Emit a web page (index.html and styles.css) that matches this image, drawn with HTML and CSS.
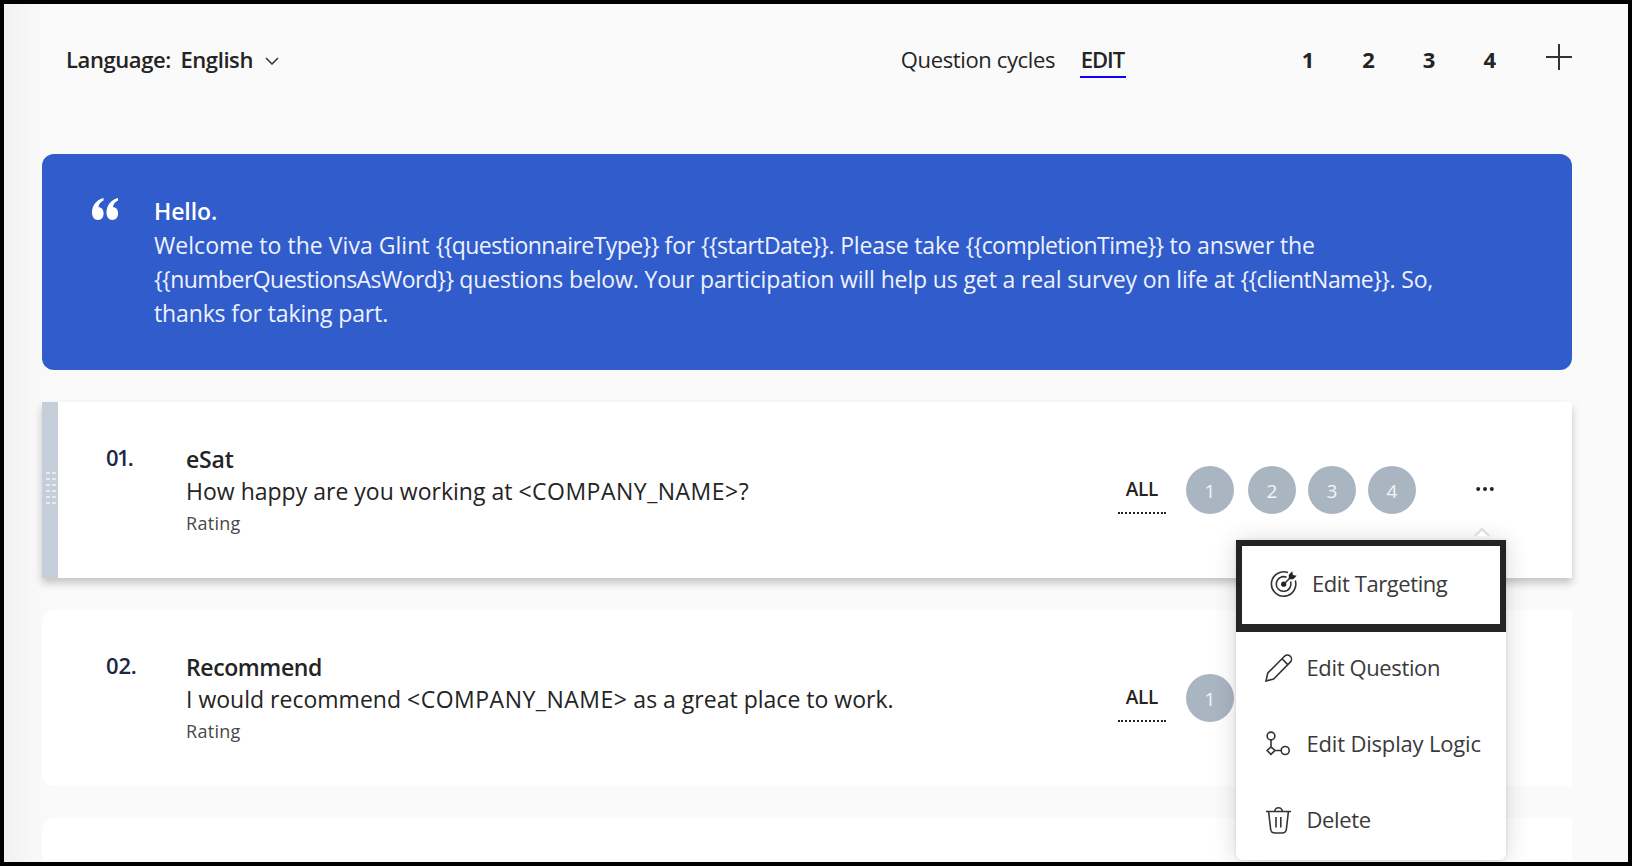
FILE: index.html
```html
<!DOCTYPE html>
<html lang="en">
<head>
<meta charset="utf-8">
<title>Questionnaire</title>
<link rel="stylesheet" href="styles.css">
</head>
<body>
<div class="page">
  <header class="toolbar">
    <span class="lang-label">Language:</span>
    <span class="lang-value">English</span>
    <svg class="chevron" width="14" height="8" viewBox="0 0 14 8"><path d="M1 1l6 6 6-6"/></svg>
    <span class="cycles-label">Question cycles</span>
    <a class="edit">EDIT</a>
    <nav class="cycles"><b>1</b><b>2</b><b>3</b><b>4</b></nav>
    <svg class="plus" width="26" height="26" viewBox="0 0 26 26"><path d="M13 0v26M0 13h26"/></svg>
  </header>

  <section class="banner">
    <svg class="quote" width="28" height="23" viewBox="0 0 28 23"><path d="M11.5 0v2.6C8.500 4 6.800 6.300 6.500 9.300C9.800 9.300 11.600 12 11.600 15.300C11.600 19.500 9.300 22 6 22C2.300 22 0 19 0 14.500C0 7.500 4.500 1.500 11.500 0zM26 0v2.600C23 4 21.300 6.300 21 9.300C24.300 9.300 26.100 12 26.100 15.300C26.100 19.500 23.800 22 20.500 22C16.800 22 14.500 19 14.500 14.500C14.500 7.500 19 1.500 26 0z"/></svg>
    <div class="banner-text">
      <strong class="hello">Hello.</strong>
      <p class="line line-1"><span class="lead">Welcome to the Viva Glint </span><span class="var">{{questionnaireType}}</span> for <span class="var">{{startDate}}</span>. Please take <span class="var">{{completionTime}}</span> to answer the</p>
      <p class="line line-2"><span class="var">{{numberQuestionsAsWord}}</span> questions below. Your participation will help us get a real survey on life at <span class="var">{{clientName}}</span>. So,</p>
      <p class="line line-3">thanks for taking part.</p>
    </div>
  </section>

  <article class="card card-active">
    <div class="handle">
      <svg width="10" height="35" viewBox="0 0 10 35"><path d="M2 0v35M8 0v35"/></svg>
    </div>
    <div class="number number-1">01.</div>
    <div class="question">
      <h2 class="title">eSat</h2>
      <p class="prompt">How happy are you working at <span class="company">&lt;COMPANY_NAME&gt;</span>?</p>
      <p class="kind">Rating</p>
    </div>
    <div class="audience">
      <span class="all">ALL</span>
      <span class="dot dot-first">1</span><span class="dot">2</span><span class="dot">3</span><span class="dot">4</span>
      <svg class="more" width="18" height="6" viewBox="0 0 18 6"><circle cx="2.200" cy="3" r="2"/><circle cx="9" cy="3" r="2"/><circle cx="15.800" cy="3" r="2"/></svg>
    </div>
  </article>

  <article class="card">
    <div class="number">02.</div>
    <div class="question">
      <h2 class="title title-2">Recommend</h2>
      <p class="prompt">I would recommend <span class="company">&lt;COMPANY_NAME&gt;</span> as a great place to work.</p>
      <p class="kind">Rating</p>
    </div>
    <div class="audience">
      <span class="all">ALL</span>
      <span class="dot dot-first">1</span><span class="dot"></span><span class="dot"></span><span class="dot"></span>
      <svg class="more" width="18" height="6"></svg>
    </div>
  </article>

  <article class="card"></article>

  <div class="menu">
    <svg class="menu-tip" width="16" height="12" viewBox="0 0 16 12"><path d="M1 9l7-7 7 7"/></svg>
    <div class="item item-focus">
      <svg width="28" height="28" viewBox="0 0 28 28">
        <path d="M18 2.600A12.200 12.200 0 1 0 25.300 10.500M16.500 7.300A7.300 7.300 0 1 0 20.500 11.600M14 14l6.500-6.500"/>
        <path class="solid" d="M18.800 8.600V4.800L22.300 1.300l.6 3.800 3.800.6-3.500 3.500h-3.800z"/>
        <circle class="solid" cx="13.700" cy="14.200" r="2.600"/>
      </svg>
      <span class="label-1">Edit Targeting</span>
    </div>
    <div class="item">
      <svg width="28" height="28" viewBox="0 0 28 28"><path d="M1 27l1.800-8L19.500 2.300a3.950 3.950 0 0 1 5.800 5.800L8.600 25zM17 4.800l5.800 5.800"/></svg>
      <span class="label-2">Edit Question</span>
    </div>
    <div class="item">
      <svg width="28" height="28" viewBox="0 0 28 28"><circle cx="6" cy="6" r="3.900"/><path d="M6 9.900v7M6 16.900l3.900 3.600L6 24.400l-3.900-3.900zM9.900 20.500h6.300"/><circle cx="20.200" cy="20.500" r="4"/></svg>
      <span class="label-3">Edit Display Logic</span>
    </div>
    <div class="item">
      <svg width="28" height="28" viewBox="0 0 28 28"><path d="M1 5.500h25M9.700 5.500a3.800 3.800 0 0 1 7.600 0M3.600 5.500l2 17.500q.4 4 4.400 4h7q4 0 4.400-4l2-17.500M11 11v10.500M15.800 11v10.500"/></svg>
      <span class="label-4">Delete</span>
    </div>
  </div>
</div>
</body>
</html>
```

FILE: styles.css
```css
* { box-sizing: border-box; }

body {
  margin: 0;
  font-family: "Open Sans", "Noto Sans", sans-serif;
  font-size: 23px;
  color: #242424;
}

h2, p { margin: 0; }

svg { flex: none; display: block; fill: none; stroke: #333; stroke-width: 1.6; }

.page {
  position: relative;
  width: 1632px;
  height: 866px;
  overflow: hidden;
  border: 4px solid #000;
  padding: 0 56px 0 38px;
  background: linear-gradient(90deg, #f1f1f1 0, #f8f8f8 30px, #fafafa 50px);
}

.toolbar {
  display: flex;
  align-items: flex-start;
  height: 150px;
  padding: 38px 0 0 24px;
  font-size: 22px;
  line-height: 34px;
  white-space: nowrap;
}

.lang-label { width: 114.5px; font-weight: 600; letter-spacing: -0.4px; }
.lang-value { width: 84.5px; font-weight: 600; letter-spacing: -0.4px; }
.chevron { margin-top: 15px; stroke-width: 1.5; }
.cycles-label { margin-left: 622px; width: 179px; letter-spacing: -0.37px; }
.edit { width: 46px; height: 36px; border-bottom: 2px solid #1400ff; padding-left: 1px; font-weight: 600; font-size: 22px; letter-spacing: -1px; }
.cycles { display: flex; margin-left: 152px; }
.cycles b { width: 60.6px; text-align: center; }
.plus { margin: 2px 0 0 26px; stroke-width: 2; }

.banner {
  display: flex;
  height: 216px;
  padding: 40px 0 0 50px;
  border-radius: 12px;
  background: #315ccc;
  color: #fff;
}
.quote { margin-top: 4px; fill: #fff; stroke: none; }
.banner-text { margin-left: 34px; line-height: 34px; }
.hello { display: block; font-weight: 600; letter-spacing: -0.1px; }
.line { white-space: nowrap; color: #eef2fc; }
.line-1 { letter-spacing: -0.15px; }
.line-2 { letter-spacing: -0.13px; }
.line-3 { letter-spacing: -0.13px; }
.lead { letter-spacing: 0.04px; }
.var { letter-spacing: -0.55px; }

.card {
  display: flex;
  position: relative;
  height: 176px;
  margin-top: 32px;
  padding: 41px 78px 0 64px;
  border-radius: 12px 0 0 12px;
  background: #fff;
  line-height: 32px;
}
.card-active { border-radius: 0; box-shadow: 0 5px 8px rgba(0, 0, 0, .22); }
.handle {
  position: absolute;
  inset: 0 auto 0 0;
  width: 16px;
  padding: 70px 0 0 4px;
  background: #c5cfd9;
}
.handle svg { stroke: #e6eaee; stroke-width: 4; stroke-dasharray: 2 4; }
.number { width: 80px; margin-top: -2px; font-size: 22px; font-weight: 600; color: #1b2845; letter-spacing: -0.2px; }
.number-1 { letter-spacing: -1.7px; }
.question { white-space: nowrap; }
.title { font-size: 23px; font-weight: 600; letter-spacing: -0.2px; }
.title-2 { letter-spacing: -0.4px; }
.prompt { letter-spacing: 0.01px; }
.company { letter-spacing: 0.5px; }
.kind { font-size: 18px; color: #484848; letter-spacing: 0.3px; }

.audience { display: flex; margin: 23px 0 0 auto; }
.all {
  width: 48px;
  height: 48px;
  border-bottom: 2px dotted #242424;
  text-align: center;
  font-size: 19px;
  font-weight: 600;
  line-height: 46px;
  letter-spacing: -0.3px;
}
.dot {
  width: 48px;
  height: 48px;
  margin-left: 12px;
  border-radius: 50%;
  background: #a9b5c1;
  color: #f4f6f8;
  font-size: 19px;
  line-height: 50px;
  text-align: center;
}
.dot-first { margin: 0 2px 0 20px; }
.more { margin: 20px 0 0 60px; fill: #242424; stroke: none; }

.menu {
  position: absolute;
  left: 1232px;
  top: 536px;
  width: 270px;
  height: 320px;
  border-radius: 0 0 6px 6px;
  background: #fff;
  box-shadow: 0 2px 24px rgba(0, 0, 0, .16), 0 0 3px rgba(0, 0, 0, .14);
  white-space: nowrap;
}
.menu-tip { position: absolute; left: 238px; top: -13px; fill: #fff; stroke: #dcdcdc; stroke-width: 2; }
.item { display: flex; align-items: center; height: 76px; padding-left: 29px; font-size: 22px; color: #3a3a3a; }
.item span { margin: -2px 0 0 13.5px; letter-spacing: -0.37px; }
.item .label-3 { letter-spacing: -0.18px; }
.item-focus {
  height: 92px;
  padding: 0 0 2px 28px;
  border: 6px solid #242424;
  border-bottom-width: 8px;
  margin-bottom: -2px;
}
.item .label-1 { margin-left: 14px; letter-spacing: -0.42px; }
.item .solid { fill: #242424; stroke: none; }
```
